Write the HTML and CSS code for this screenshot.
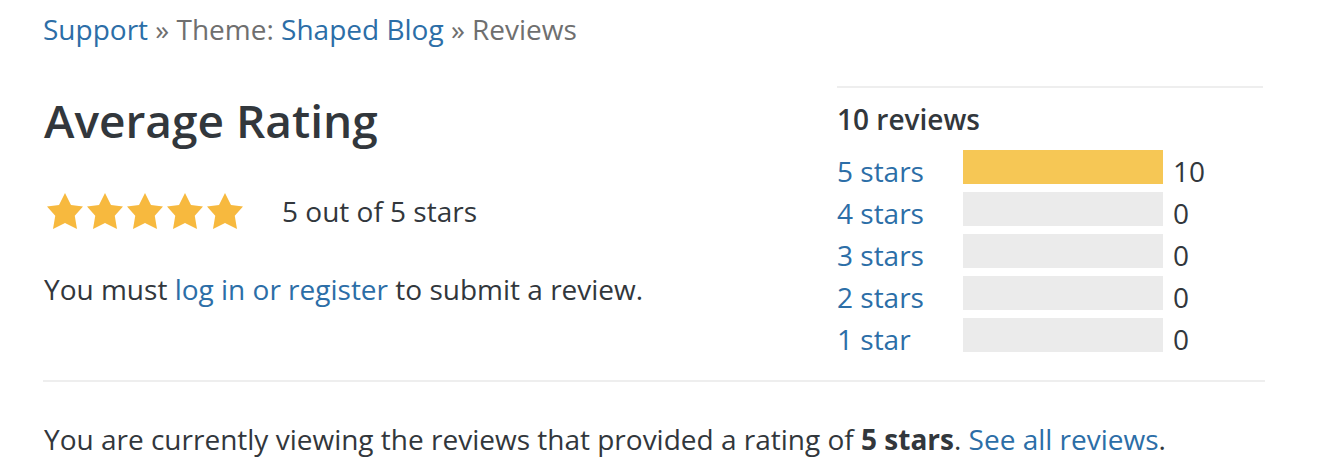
FILE: index.html
```html
<!DOCTYPE html>
<html lang="en">
<head>
<meta charset="utf-8">
<title>Reviews</title>
<link rel="stylesheet" href="styles.css">
</head>
<body>
<div class="page">
  <nav class="breadcrumb"><a href="#">Support</a> » Theme: <a href="#">Shaped Blog</a> » Reviews</nav>

  <section class="summary">
    <div class="summary-main">
      <h1 class="title">Average Rating</h1>
      <div class="rating">
        <div class="stars">
          <svg class="star" viewBox="1 1 18 18"><path d="M10 1l3 6 6 .75-4.12 4.62L16 19l-6-3-6 3 1.13-6.630L1 7.75 7 7z"/></svg>
          <svg class="star" viewBox="1 1 18 18"><path d="M10 1l3 6 6 .75-4.12 4.62L16 19l-6-3-6 3 1.13-6.63L1 7.75 7 7z"/></svg>
          <svg class="star" viewBox="1 1 18 18"><path d="M10 1l3 6 6 .75-4.12 4.62L16 19l-6-3-6 3 1.13-6.63L1 7.75 7 7z"/></svg>
          <svg class="star" viewBox="1 1 18 18"><path d="M10 1l3 6 6 .75-4.12 4.62L16 19l-6-3-6 3 1.13-6.63L1 7.75 7 7z"/></svg>
          <svg class="star" viewBox="1 1 18 18"><path d="M10 1l3 6 6 .75-4.12 4.62L16 19l-6-3-6 3 1.13-6.63L1 7.75 7 7z"/></svg>
        </div>
        <span class="rating-text">5 out of 5 stars</span>
      </div>
      <p class="login-note">You must <a href="#">log in or register</a> to submit a review.</p>
    </div>

    <aside class="counts">
      <h2 class="counts-title">10 reviews</h2>
      <ul class="count-list">
        <li class="count-row"><a href="#" class="count-label">5 stars</a><span class="bar"><span class="bar-fill" style="width:100%"></span></span><span class="count-num">10</span></li>
        <li class="count-row"><a href="#" class="count-label">4 stars</a><span class="bar"><span class="bar-fill" style="width:0%"></span></span><span class="count-num">0</span></li>
        <li class="count-row"><a href="#" class="count-label">3 stars</a><span class="bar"><span class="bar-fill" style="width:0%"></span></span><span class="count-num">0</span></li>
        <li class="count-row"><a href="#" class="count-label">2 stars</a><span class="bar"><span class="bar-fill" style="width:0%"></span></span><span class="count-num">0</span></li>
        <li class="count-row"><a href="#" class="count-label">1 star</a><span class="bar"><span class="bar-fill" style="width:0%"></span></span><span class="count-num">0</span></li>
      </ul>
    </aside>
  </section>

  <hr class="divider">

  <p class="filter-note">You are currently viewing the reviews that provided a rating of <strong>5 stars</strong>. <a href="#">See all reviews</a>.</p>
</div>
</body>
</html>
```

FILE: styles.css
```css
* { box-sizing: border-box; }

body {
  margin: 0;
  background: #fff;
  color: #32373c;
  font-family: "Open Sans", "Noto Sans", sans-serif;
  font-size: 28px;
  line-height: 42px;
}

a {
  color: #2c6ea7;
  text-decoration: none;
}

.page {
  padding: 8px 57px 0 43px;
}

.breadcrumb {
  color: #6f6f6f;
  line-height: 42px;
}

.summary {
  display: grid;
  grid-template-columns: 1fr 426px;
  margin-top: 36px;
  padding-right: 2px;
}

.title {
  margin: 3px 0 0 1px;
  font-size: 46px;
  line-height: 62px;
  font-weight: 600;
  color: #32373c;
}

.rating {
  display: flex;
  align-items: center;
  margin-top: 39px;
  height: 42px;
}

.stars {
  display: flex;
  gap: 4px;
  margin-left: 4px;
}

.star {
  width: 36px;
  height: 36px;
  fill: #f7b93e;
  display: block;
}

.rating-text {
  margin-left: 39px;
}

.login-note {
  margin: 36px 0 0 1px;
}

.counts {
  border-top: 2px solid #eeeeee;
  padding-top: 10px;
}

.counts-title {
  margin: 0 0 10px;
  font-size: 28px;
  line-height: 42px;
  font-weight: 600;
  color: #32373c;
}

.count-list {
  list-style: none;
  margin: 0;
  padding: 0;
}

.count-row {
  display: flex;
  align-items: flex-start;
  height: 42px;
}

.count-label {
  width: 126px;
  flex: none;
}

.bar {
  width: 200px;
  height: 34px;
  background: #ebebeb;
  flex: none;
  display: block;
}

.bar-fill {
  display: block;
  height: 100%;
  background: #f6c755;
}

.count-num {
  margin-left: 10px;
}

.divider {
  margin: 20px 0 0;
  border: 0;
  border-top: 2px solid #eeeeee;
  height: 0;
}

.filter-note {
  margin: 36px 0 0 1px;
}

.filter-note strong {
  font-weight: 700;
}
```
